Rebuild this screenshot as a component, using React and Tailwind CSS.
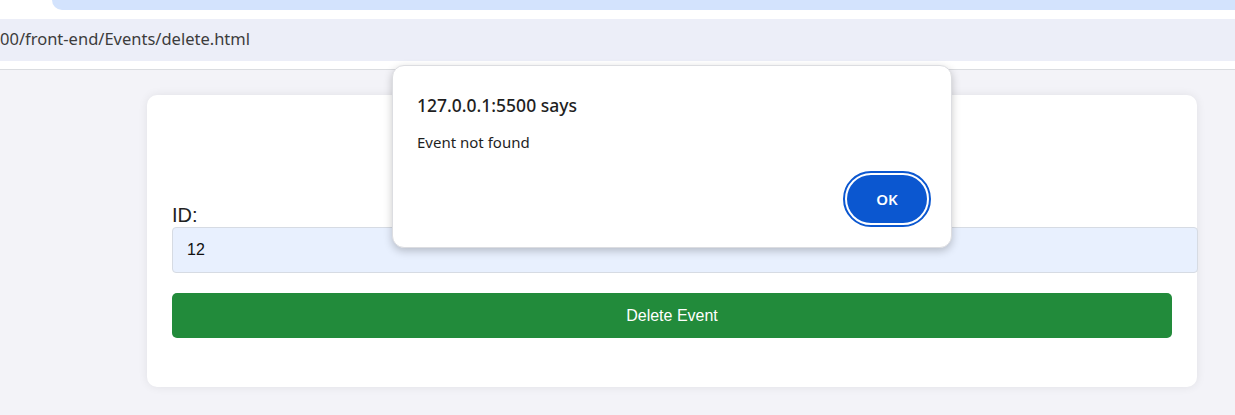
export default function App() {
  return (
    <div className="relative w-[1235px] h-[415px] overflow-hidden bg-white">
      {/* browser chrome */}
      <div className="h-[10px] bg-white flex">
        <div className="ml-[52px] flex-1 h-[10px] bg-[#d3e3fd] rounded-bl-[12px]" />
      </div>
      <div className="h-[9px] bg-white" />
      <div className="h-[42px] bg-[#eceef8] flex items-center">
        <span className="text-[16.5px] text-[#3c3c3c] leading-none pb-[2px]" style={{ fontFamily: '"Noto Sans", "Open Sans", sans-serif' }}>
          00/front-end/Events/delete.html
        </span>
      </div>
      <div className="h-[8px] bg-white" />
      <div className="h-[1px] bg-[#dadce0]" />

      {/* page */}
      <div className="h-[345px] bg-[#f3f3f8] pt-[25px]" style={{ fontFamily: '"Liberation Sans", Arial, sans-serif' }}>
        <div className="ml-[147px] w-[1050px] h-[292px] bg-white rounded-[10px] shadow-[0_0_10px_rgba(0,0,0,0.08)] p-[25px]">
          <h2 className="h-[84px] text-center text-[24px] font-bold text-[#333] pt-[20px] m-0">Delete Event</h2>
          <label className="block text-[20px] leading-[23px] text-[#222]">ID:</label>
          <div className="w-[1026px] h-[46px] bg-[#e8f0fe] border border-[#d6dbe3] rounded-[4px] flex items-center px-[14px] text-[16px] text-[#111]">
            12
          </div>
          <button className="mt-[20px] w-[1000px] h-[45px] bg-[#228b3b] rounded-[5px] text-white text-[16px] flex items-center justify-center">
            Delete Event
          </button>
        </div>
      </div>

      {/* alert dialog (overlay) */}
      <div
        className="absolute left-[392px] top-[65px] w-[560px] h-[183px] bg-white rounded-[12px] border border-[#dcdde1] shadow-[0_3px_8px_rgba(0,0,0,0.22)] flex flex-col pl-[24px] pr-[20px] pt-[27px] pb-[20px]"
        style={{ fontFamily: '"Noto Sans", "Open Sans", sans-serif' }}
      >
        <div className="text-[17.5px] font-medium text-[#1f1f1f] leading-[24px]">127.0.0.1:5500 says</div>
        <div className="mt-[15px] text-[15px] text-[#1f1f1f] leading-[20px]">Event not found</div>
        <div className="flex-1 flex items-end justify-end">
          <div className="w-[88px] h-[56px] rounded-full border-[2px] border-[#0b57d0] p-[2px] bg-white">
            <div className="w-full h-full rounded-full bg-[#0b57d0] flex items-center justify-center text-white text-[15px] font-semibold">OK</div>
          </div>
        </div>
      </div>
    </div>
  );
}
